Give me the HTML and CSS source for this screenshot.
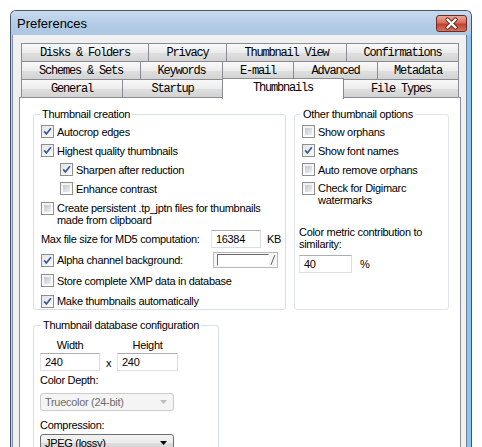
FILE: index.html
```html
<!DOCTYPE html>
<html>
<head>
<meta charset="utf-8">
<title>Preferences</title>
<link rel="stylesheet" href="styles.css">
</head>
<body>
<div class="window">
  <div class="titlebar">
    <span class="title">Preferences</span>
    <span class="close">
      <svg width="29" height="15" viewBox="0 0 29 15"><path d="M10.5 3.5 L18.5 11.5 M18.5 3.5 L10.5 11.5" stroke="#6a2418" stroke-width="4.2" stroke-linecap="round"/><path d="M10.5 3.5 L18.5 11.5 M18.5 3.5 L10.5 11.5" stroke="#fff" stroke-width="2.4" stroke-linecap="round"/></svg>
    </span>
  </div>
  <div class="client">
    <div class="tabs">
      <div class="tabrow">
        <div class="tab t-disks">Disks &amp; Folders</div>
        <div class="tab t-privacy">Privacy</div>
        <div class="tab t-tview">Thumbnail View</div>
        <div class="tab t-confirm">Confirmations</div>
      </div>
      <div class="tabrow">
        <div class="tab t-schemes">Schemes &amp; Sets</div>
        <div class="tab t-keywords">Keywords</div>
        <div class="tab t-email">E-mail</div>
        <div class="tab t-advanced">Advanced</div>
        <div class="tab t-metadata">Metadata</div>
      </div>
      <div class="tabrow">
        <div class="tab t-general">General</div>
        <div class="tab t-startup">Startup</div>
        <div class="tab t-thumbs sel">Thumbnails</div>
        <div class="tab t-filetypes">File Types</div>
      </div>
    </div>
    <div class="panel">
      <div class="top">
        <fieldset class="group g-create">
          <legend>Thumbnail creation</legend>
          <div class="row first"><span class="cb on"><svg width="11" height="11" viewBox="0 0 11 11"><path d="M2.2 5.4 L4.4 8 L8.9 2.3" fill="none" stroke="#3a5795" stroke-width="1.7"/></svg></span><span>Autocrop edges</span></div>
          <div class="row"><span class="cb on"><svg width="11" height="11" viewBox="0 0 11 11"><path d="M2.2 5.4 L4.4 8 L8.9 2.3" fill="none" stroke="#3a5795" stroke-width="1.7"/></svg></span><span>Highest quality thumbnails</span></div>
          <div class="row sub"><span class="cb on"><svg width="11" height="11" viewBox="0 0 11 11"><path d="M2.2 5.4 L4.4 8 L8.9 2.3" fill="none" stroke="#3a5795" stroke-width="1.7"/></svg></span><span>Sharpen after reduction</span></div>
          <div class="row sub"><span class="cb"></span><span>Enhance contrast</span></div>
          <div class="row multi"><span class="cb"></span><span>Create persistent .tp_jptn files for thumbnails<br>made from clipboard</span></div>
          <div class="row md5"><span class="lbl-md5">Max file size for MD5 computation:</span><span class="field f-md5">16384</span><span class="unit-kb">KB</span></div>
          <div class="row alpha"><span class="cb on"><svg width="11" height="11" viewBox="0 0 11 11"><path d="M2.2 5.4 L4.4 8 L8.9 2.3" fill="none" stroke="#3a5795" stroke-width="1.7"/></svg></span><span class="lbl-alpha">Alpha channel background:</span><span class="colorbtn"><span class="swatch"></span><svg width="6" height="12" viewBox="0 0 6 12"><path d="M1 11 L5 1" stroke="#555" stroke-width="1"/></svg></span></div>
          <div class="row xmp"><span class="cb"></span><span>Store complete XMP data in database</span></div>
          <div class="row last"><span class="cb on"><svg width="11" height="11" viewBox="0 0 11 11"><path d="M2.2 5.4 L4.4 8 L8.9 2.3" fill="none" stroke="#3a5795" stroke-width="1.7"/></svg></span><span>Make thumbnails automatically</span></div>
        </fieldset>
        <fieldset class="group g-other">
          <legend>Other thumbnail options</legend>
          <div class="row first"><span class="cb"></span><span>Show orphans</span></div>
          <div class="row"><span class="cb on"><svg width="11" height="11" viewBox="0 0 11 11"><path d="M2.2 5.4 L4.4 8 L8.9 2.3" fill="none" stroke="#3a5795" stroke-width="1.7"/></svg></span><span>Show font names</span></div>
          <div class="row"><span class="cb"></span><span>Auto remove orphans</span></div>
          <div class="row multi2"><span class="cb"></span><span>Check for Digimarc<br>watermarks</span></div>
          <div class="metric">Color metric contribution to<br>similarity:</div>
          <div class="metric-row"><span class="field f-pct">40</span><span class="unit-pct">%</span></div>
        </fieldset>
      </div>
      <fieldset class="group g-db">
        <legend>Thumbnail database configuration</legend>
        <div class="dims">
          <span class="dim-lbl">Width</span><span></span><span class="dim-lbl">Height</span>
          <span class="field f-dim">240</span><span class="times">x</span><span class="field f-dim">240</span>
        </div>
        <div class="lbl-depth">Color Depth:</div>
        <div class="combo disabled"><span>Truecolor (24-bit)</span><svg width="7" height="4" viewBox="0 0 7 4"><path d="M0 0 H7 L3.5 4 Z" fill="#bcbcbc"/></svg></div>
        <div class="lbl-comp">Compression:</div>
        <div class="combo active"><span>JPEG (lossy)</span><svg width="7" height="4" viewBox="0 0 7 4"><path d="M0 0 H7 L3.5 4 Z" fill="#000"/></svg></div>
      </fieldset>
    </div>
  </div>
</div>
</body>
</html>
```
FILE: styles.css
```css
html, body {
  margin: 0;
  padding: 0;
}
body {
  width: 482px;
  height: 447px;
  overflow: hidden;
  background: #ffffff;
  font-family: "Liberation Sans", Arial, sans-serif;
  font-size: 11px;
  letter-spacing: -0.3px;
  color: #000;
}
.window {
  margin: 10px 0 0 10px;
  width: 462px;
  box-sizing: border-box;
  border: 1px solid #44546b;
  border-bottom: none;
  border-radius: 6px 6px 0 0;
  background: linear-gradient(90deg, #b7cee8 0%, #b3cbe6 97%, #8cc6ee 98%);
  padding: 0 4px 0 1px;
}
.titlebar {
  height: 24px;
  margin: 0 -4px 0 -1px;
  padding: 4px 4px 0 6px;
  box-sizing: border-box;
  display: flex;
  justify-content: space-between;
  align-items: flex-start;
  border-radius: 5px 5px 0 0;
  background: linear-gradient(#c8dbef, #b2cae5 60%, #adc6e3);
}
.title {
  font-size: 13px;
  letter-spacing: 0;
  line-height: 16px;
  margin-top: 1px;
}
.close {
  width: 31px;
  height: 17px;
  box-sizing: border-box;
  border: 1px solid #6e2b22;
  border-radius: 3px;
  background: linear-gradient(#e9a899, #d6705d 45%, #c2432e 55%, #d5735e);
  display: flex;
  align-items: center;
  justify-content: center;
}
.close svg {
  display: block;
}
.client {
  background: #f0f0f0;
  border-left: 1px solid #8396ad;
  border-right: 1px solid #6d7f96;
  padding: 8px 5px 0 6px;
  height: 420px;
}
.tabs {
  margin-left: 2px;
  width: 438px;
}
.tabrow {
  display: flex;
  height: 19px;
  align-items: flex-start;
}
.tabrow + .tabrow {
  margin-top: -1px;
}
.tab {
  flex: none;
  height: 19px;
  box-sizing: border-box;
  border: 1px solid #898c94;
  background: linear-gradient(#f9f9f9, #ececec 50%, #dedede 55%, #d3d3d3);
  font-family: "Liberation Mono", "DejaVu Sans Mono", monospace;
  font-size: 12px;
  letter-spacing: -1.2px;
  padding-top: 2px;
  line-height: 15px;
  text-align: center;
  color: #000;
}
.tab + .tab {
  margin-left: -1px;
}
.tab.sel {
  position: relative;
  z-index: 1;
  margin-top: -1px;
  height: 21px;
  border-bottom: none;
  background: #ffffff;
  padding-top: 2px;
}
.t-disks { width: 128px; }
.t-privacy { width: 79px; }
.t-tview { width: 121px; }
.t-confirm { width: 113px; }
.t-schemes { width: 120px; }
.t-keywords { width: 83px; }
.t-email { width: 72px; }
.t-advanced { width: 85px; }
.t-metadata { width: 82px; }
.t-general { width: 102px; }
.t-startup { width: 101px; }
.t-thumbs { width: 122px; }
.t-filetypes { width: 116px; }

.panel {
  margin-top: -1px;
  width: 442px;
  height: 380px;
  box-sizing: border-box;
  border: 1px solid #898c94;
  background: #ffffff;
  padding: 10px 0 0 13px;
}
.top {
  display: flex;
  gap: 8px;
  align-items: stretch;
}
.group {
  margin: 0;
  box-sizing: border-box;
  border: 1px solid #d5dfe5;
  border-radius: 3px;
  padding: 0 4px 0 7px;
  min-width: 0;
}
.group legend {
  padding: 0 2px;
  margin-left: -1px;
  line-height: 13px;
}
.g-create { width: 253px; }
.g-other { width: 155px; border-color: #dfe5ea; }
.g-db {
  width: 186px;
  margin-top: 9px;
  padding-left: 6px;
  height: 140px;
}
.g-db legend { margin-left: 1px; }

.row {
  display: flex;
  align-items: center;
  height: 19px;
  white-space: nowrap;
}
.row.first { margin-top: 1px; }
.row.sub { padding-left: 19px; }
.row.multi {
  height: 30px;
  box-sizing: border-box;
  align-items: flex-start;
  padding-top: 4px;
  line-height: 12px;
}
.row.multi2 {
  height: 27px;
  box-sizing: border-box;
  align-items: flex-start;
  padding-top: 3px;
  line-height: 12px;
}
.row.md5 { height: 22px; }
.row.alpha { height: 20px; }
.row.xmp { height: 21px; }
.row.last {
  height: 18px;
  box-sizing: border-box;
  padding-top: 2px;
}
.cb {
  flex: none;
  width: 13px;
  height: 13px;
  box-sizing: border-box;
  margin-right: 3px;
  border: 1px solid #8e8f8f;
  padding: 2px;
  background: linear-gradient(135deg, #c3c7cc, #eef0f2) content-box, linear-gradient(#f2f2f2, #fdfdfd);
}
.cb.on {
  padding: 0;
  background: linear-gradient(135deg, #e2e4e8, #fbfbfb);
}
.cb svg { display: block; }

.field {
  display: block;
  flex: none;
  box-sizing: border-box;
  height: 18px;
  border: 1px solid #dadde3;
  border-top-color: #abadb3;
  border-left-color: #e2e3ea;
  background: #fff;
  padding: 0 4px;
  line-height: 16px;
}
.lbl-md5 { width: 172px; }
.f-md5 { width: 50px; }
.unit-kb { margin-left: 6px; }
.lbl-alpha { width: 156px; }
.colorbtn {
  flex: none;
  width: 65px;
  height: 16px;
  box-sizing: border-box;
  border: 1px solid #b9b9b9;
  background: #f6f6f6;
  display: flex;
  align-items: center;
  padding: 0 1px 0 3px;
}
.swatch {
  width: 52px;
  height: 10px;
  border-left: 1px solid #6a6a6a;
  border-top: 1px solid #6a6a6a;
  border-right: 1px solid #fff;
  border-bottom: 1px solid #fff;
  background: #fff;
}
.colorbtn svg { display: block; margin-left: 1px; }

.metric {
  margin-top: 20px;
  margin-left: -3px;
  line-height: 12px;
}
.metric-row {
  display: flex;
  align-items: center;
  margin-top: 5px;
  margin-left: -3px;
}
.f-pct { width: 53px; }
.unit-pct { margin-left: 8px; }

.dims {
  display: grid;
  grid-template-columns: 60px 17px 61px;
  grid-template-rows: 13px 18px;
  row-gap: 1px;
  margin-top: 7px;
  align-items: center;
}
.dim-lbl {
  text-align: center;
  line-height: 13px;
}
.times {
  text-align: center;
  line-height: 13px;
  margin-top: 2px;
}
.lbl-depth {
  margin-top: 3px;
  line-height: 13px;
}
.lbl-comp {
  margin-top: 8px;
  line-height: 13px;
}
.combo {
  width: 134px;
  height: 18px;
  box-sizing: border-box;
  border-radius: 3px;
  display: flex;
  align-items: center;
  justify-content: space-between;
  padding: 0 6px 0 4px;
}
.combo svg { display: block; }
.combo.disabled {
  margin-top: 6px;
  border: 1px solid #cbcbcb;
  background: #f4f4f4;
  color: #6d6d6d;
}
.combo.active {
  margin-top: 2px;
  border: 1px solid #707070;
  background: linear-gradient(#f3f3f3, #ebebeb 50%, #dddddd 52%, #cfcfcf);
}
```
